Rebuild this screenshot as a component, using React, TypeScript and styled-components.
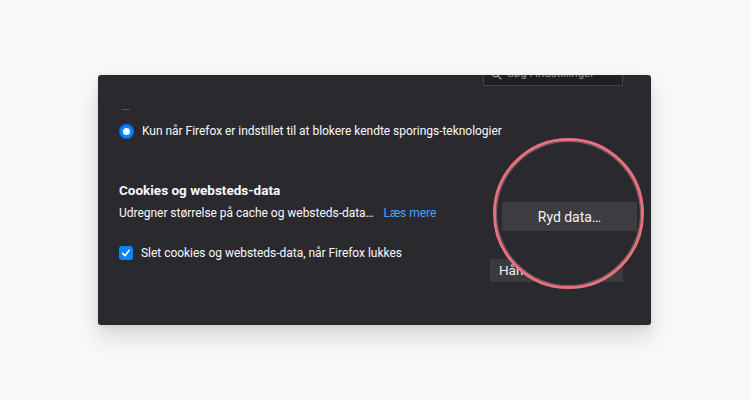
import React from "react";
import styled, { createGlobalStyle } from "styled-components";

const Global = createGlobalStyle`
  html, body { margin: 0; padding: 0; background: #f8f8f8; }
  body { font-family: Roboto, "Noto Sans", "Liberation Sans", sans-serif; }
  #root { width: 750px; height: 400px; overflow: hidden; }
`;

const Stage = styled.div`
  width: 750px;
  height: 400px;
  padding: 75px 0 0 98px;
  box-sizing: border-box;
  background: #f8f8f8;
`;

const Panel = styled.div`
  position: relative;
  width: 553px;
  height: 250px;
  background: #2a2a2e;
  border-radius: 3px;
  box-shadow: 0 12px 22px rgba(0, 0, 0, 0.13), 0 2px 6px rgba(0, 0, 0, 0.08);
  overflow: hidden;
  display: flex;
  flex-direction: column;
  padding: 0 28px 0 21px;
  box-sizing: border-box;
  color: #f9f9fa;
  font-size: 12px;
  letter-spacing: -0.03px;
`;

const TopBar = styled.div`
  display: flex;
  justify-content: flex-end;
  height: 11px;
`;

const Search = styled.div`
  margin-top: -13px;
  width: 140px;
  height: 24px;
  box-sizing: border-box;
  border: 1px solid #45454a;
  background: #202023;
  display: flex;
  align-items: center;
  gap: 5px;
  padding: 0 7px;
  color: #8f8f94;
  font-size: 11.5px;
  line-height: 1;
`;

const Remnant = styled.div`
  margin: 23px 0 0 3px;
  width: 8px;
  height: 1px;
  background: #55555a;
`;

const OptionRow = styled.div<{ $top: number }>`
  display: flex;
  align-items: center;
  gap: 8px;
  margin-top: ${(p) => p.$top}px;
  line-height: 16px;
`;

const Radio = styled.span`
  width: 15px;
  height: 15px;
  border-radius: 50%;
  background: #0a84ff;
  box-shadow: 0 0 0 1px #0060df inset;
  display: flex;
  align-items: center;
  justify-content: center;
  flex: none;
  &::after {
    content: "";
    width: 7px;
    height: 7px;
    border-radius: 50%;
    background: #ffffff;
  }
`;

const Check = styled.span`
  width: 14px;
  height: 14px;
  border-radius: 3px;
  background: #0a84ff;
  display: flex;
  align-items: center;
  justify-content: center;
  flex: none;
`;

const Section = styled.div`
  display: flex;
  justify-content: space-between;
  margin-top: 42px;
`;

const LeftCol = styled.div`
  display: flex;
  flex-direction: column;
`;

const Heading = styled.div`
  font-weight: 700;
  font-size: 13.5px;
  line-height: 18px;
  letter-spacing: 0;
`;

const Desc = styled.div`
  margin-top: 6px;
  line-height: 16px;
  display: flex;
  gap: 10px;
`;

const Link = styled.span`
  color: #45a1ff;
`;

const RightCol = styled.div`
  display: flex;
  flex-direction: column;
  gap: 40px;
  margin-top: 15px;
`;

const Button = styled.div<{ $width: number; $covered?: boolean }>`
  width: ${(p) => p.$width}px;
  height: 23px;
  line-height: 23px;
  background: #3a3a3f;
  padding: 0 6px 0 9px;
  box-sizing: border-box;
  font-size: 13.5px;
  white-space: nowrap;
  overflow: hidden;
  text-overflow: ellipsis;
  color: #f0f0f2;
  visibility: ${(p) => (p.$covered ? "hidden" : "visible")};
`;

const Magnifier = styled.div`
  position: absolute;
  left: 395px;
  top: 63px;
  width: 151px;
  height: 151px;
  box-sizing: border-box;
  border-radius: 50%;
  border: 3px solid #e9707f;
  background: #2a2a2e;
  box-shadow: inset 0 0 0 1px rgba(255, 200, 210, 0.35);
  overflow: hidden;
`;

const BigButton = styled.div`
  position: absolute;
  left: 6px;
  top: 61px;
  width: 135px;
  height: 29px;
  background: #3c3c41;
  display: flex;
  align-items: center;
  justify-content: center;
  font-size: 14px;
  color: #f4f4f6;
`;

export default function App() {
  return (
    <>
      <Global />
      <Stage>
        <Panel>
          <TopBar>
            <Search>
              <svg width="11" height="11" viewBox="0 0 16 16" fill="none" stroke="#9a9aa0" strokeWidth="1.8">
                <circle cx="6.5" cy="6.5" r="4.8" />
                <path d="M10 10l4.5 4.5" strokeLinecap="round" />
              </svg>
              <span>Søg i indstillinger</span>
            </Search>
          </TopBar>
          <Remnant />
          <OptionRow $top={13}>
            <Radio />
            <span>Kun når Firefox er indstillet til at blokere kendte sporings-teknologier</span>
          </OptionRow>
          <Section>
            <LeftCol>
              <Heading>Cookies og websteds-data</Heading>
              <Desc>
                <span>Udregner størrelse på cache og websteds-data…</span>
                <Link>Læs mere</Link>
              </Desc>
              <OptionRow $top={24}>
                <Check>
                  <svg width="10" height="10" viewBox="0 0 10 10" fill="none" stroke="#fff" strokeWidth="1.6" strokeLinecap="round" strokeLinejoin="round">
                    <path d="M1.8 5.4l2.2 2.4 4.2-5.6" />
                  </svg>
                </Check>
                <span>Slet cookies og websteds-data, når Firefox lukkes</span>
              </OptionRow>
            </LeftCol>
            <RightCol>
              <Button $width={133} $covered>Ryd data…</Button>
              <Button $width={133}>Håndter undtagelser…</Button>
            </RightCol>
          </Section>
          <Magnifier>
            <BigButton>Ryd data…</BigButton>
          </Magnifier>
        </Panel>
      </Stage>
    </>
  );
}
